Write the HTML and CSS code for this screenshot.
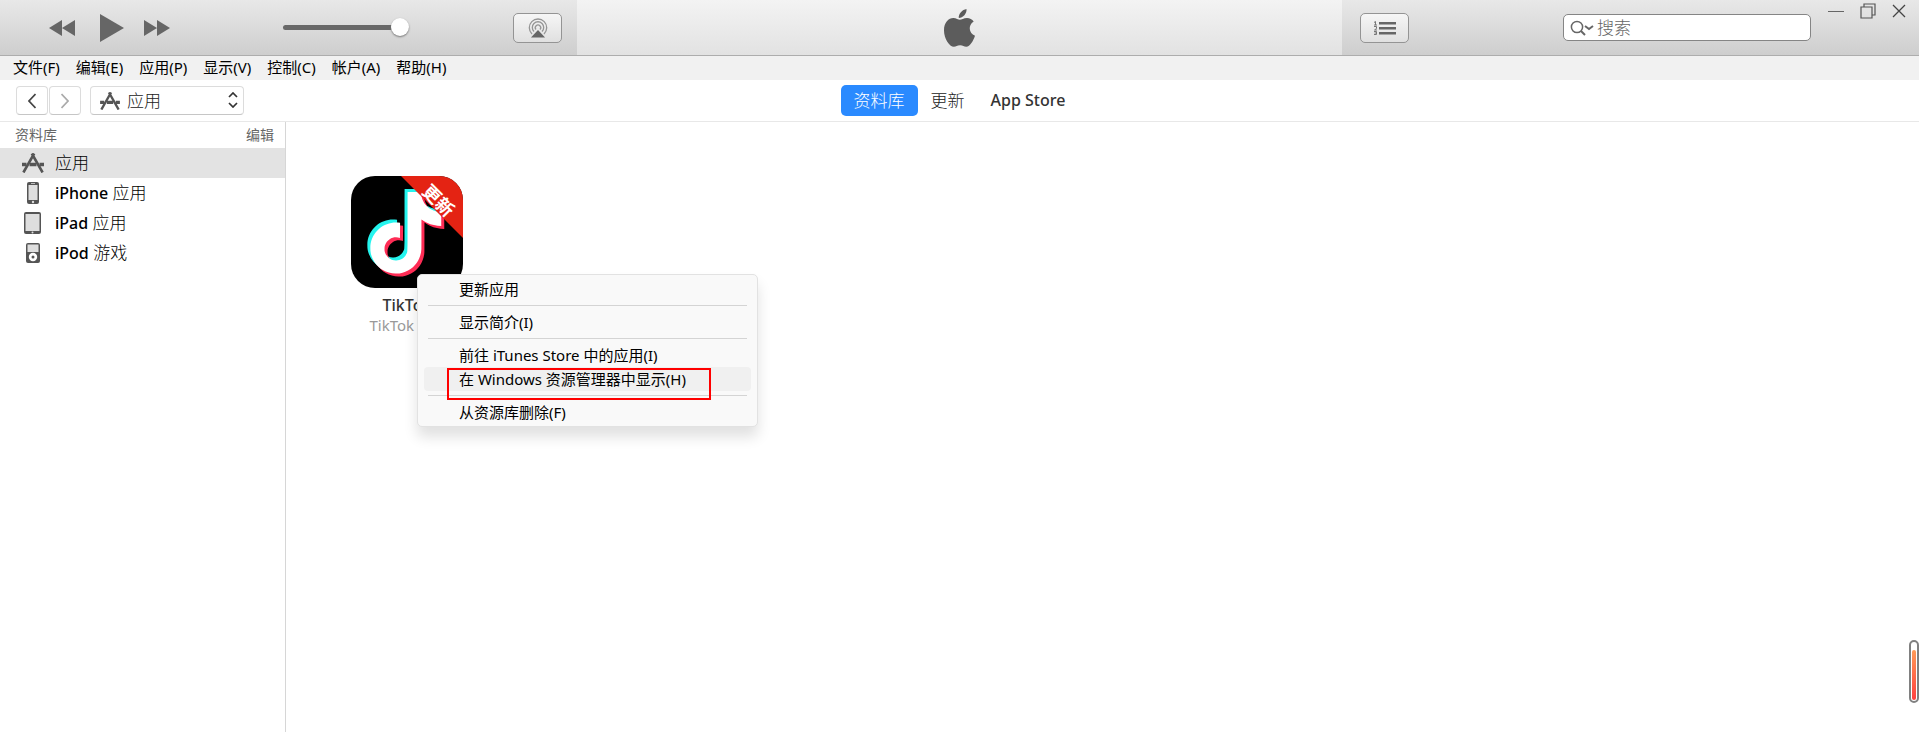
FILE: index.html
```html
<!DOCTYPE html>
<html lang="zh-CN">
<head>
<meta charset="utf-8">
<title>iTunes</title>
<link rel="stylesheet" href="styles.css">
</head>
<body>
<svg class="defs" aria-hidden="true">
  <symbol id="apps" viewBox="0 0 22 20">
    <g fill="none" stroke="currentColor">
      <path d="M9.800 0.500L20.600 19.500M12.200 0.500L1.400 19.500" stroke-width="2.600"/>
      <path d="M0 11.500h4.500M7.500 11.500h7M17.500 11.500h4.500" stroke-width="3.600"/>
    </g>
  </symbol>
</svg>
<div class="app">
  <header class="player">
    <div class="player-left">
      <button class="plain" aria-label="上一首"><svg width="26" height="16" viewBox="0 0 26 16"><path d="M13 0v16L0 8zM26 0v16L13 8z"/></svg></button>
      <button class="plain play" aria-label="播放"><svg width="24" height="28" viewBox="0 0 24 28"><path d="M0 0l24 14L0 28z"/></svg></button>
      <button class="plain" aria-label="下一首"><svg width="26" height="16" viewBox="0 0 26 16"><path d="M0 0v16l13-8zM13 0v16l13-8z"/></svg></button>
      <input class="volume" type="range" min="0" max="100" value="100" aria-label="音量">
      <button class="bevel airplay" aria-label="AirPlay"><svg width="20" height="20" viewBox="0 0 20 20"><g fill="none" stroke="#959595" stroke-width="1.300"><path d="M4 16A8.700 8.700 0 1 1 16 16"/><path d="M6 13.500A5.700 5.700 0 1 1 14 13.500"/><path d="M8 11.500A2.700 2.700 0 1 1 12 11.500"/></g><path d="M10 12l7 7.500H3z"/></svg></button>
    </div>
    <div class="player-center">
      <svg width="31" height="38" viewBox="0 0 31 38" role="img" aria-label="Apple"><path d="M22.500 0c.5 4.500-3.500 9-7.700 9C14.300 4.800 18.400.7 22.500 0zM15.800 10.800c1.800 0 3.800-1.900 7.200-1.900 2.700 0 5.200 1.400 6.700 3.600-5.900 3.600-4.900 11.700 1.300 14.200-1.700 4.900-4.900 11-8.700 11-2.400 0-3.300-1.500-6.200-1.500-3 0-4 1.500-6.200 1.500C5.500 37.700 0 29.500 0 21.400 0 13.300 4.700 9 9.300 9c2.800 0 5 1.800 6.500 1.800z"/></svg>
    </div>
    <div class="player-right">
      <button class="bevel" aria-label="待播清单"><svg width="22" height="14" viewBox="0 0 22 14"><path d="M5 1h17v2.500H5zM5 6h17v2.500H5zM5 11h17v2.500H5z"/><g fill="none" stroke="#777" stroke-width="1"><path d="M0 1.500l1.500-1V4M0 4h3M0 5.500h2.500V7.500L.5 9H3M0 10.500h2.500v3H0M.5 12h2"/></g></svg></button>
      <label class="search">
        <svg width="24" height="16" viewBox="0 0 24 16" fill="none" stroke="#666"><circle cx="7" cy="7" r="5.600" stroke-width="1.500"/><path d="M11 11l4 4" stroke-width="2"/><path d="M15 6l4 3 4-3" stroke-width="2"/></svg>
        <input type="search" placeholder="搜索" aria-label="搜索">
      </label>
      <div class="window">
        <button class="plain" aria-label="最小化"><svg width="16" height="16" viewBox="0 0 16 16"><path d="M0 8h16v1H0z"/></svg></button>
        <button class="plain" aria-label="还原"><svg width="16" height="16" viewBox="0 0 16 16" fill="none" stroke="#555" stroke-width="1.200"><path d="M1 4h11v11H1zM4 4V1h11v11h-3"/></svg></button>
        <button class="plain" aria-label="关闭"><svg width="14" height="16" viewBox="0 0 14 16" fill="none" stroke="#444" stroke-width="1.300"><path d="M1 2l12 12M13 2L1 14"/></svg></button>
      </div>
    </div>
  </header>

  <nav class="menubar" aria-label="菜单">
    <button>文件(F)</button>
    <button>编辑(E)</button>
    <button>应用(P)</button>
    <button>显示(V)</button>
    <button>控制(C)</button>
    <button>帐户(A)</button>
    <button>帮助(H)</button>
  </nav>

  <div class="toolbar">
    <div class="toolbar-left">
      <button class="step" aria-label="后退"><svg width="8" height="16" viewBox="0 0 8 16" fill="none" stroke="#444" stroke-width="1.700"><path d="M7.500 1L1 8l6.500 7"/></svg></button>
      <button class="step" aria-label="前进"><svg width="8" height="16" viewBox="0 0 8 16" fill="none" stroke="#aaa" stroke-width="1.700"><path d="M.5 1L7 8l-6.500 7"/></svg></button>
      <div class="kind">
        <svg class="kind-icon" width="20" height="18"><use href="#apps"/></svg>
        <select aria-label="媒体类型"><option>应用</option></select>
        <svg class="kind-arrows" width="10" height="16" viewBox="0 0 10 16" fill="none" stroke="#333" stroke-width="1.700"><path d="M1 5l4-4 4 4M1 11l4 4 4-4"/></svg>
      </div>
    </div>
    <div class="tabs">
      <button class="tab active">资料库</button>
      <button class="tab">更新</button>
      <button class="tab store">App Store</button>
    </div>
    <div></div>
  </div>

  <div class="body">
    <aside class="sidebar">
      <div class="side-head"><span>资料库</span><button>编辑</button></div>
      <a class="side-item current" href="#apps-all"><svg width="22" height="20"><use href="#apps"/></svg><span>应用</span></a>
      <a class="side-item" href="#iphone"><svg width="22" height="22" viewBox="0 0 22 22"><rect x="5" y="0" width="12" height="22" rx="2" fill="#555"/><path d="M6.500 3h9v15h-9z" fill="#dedede"/><path d="M9 1.500h4" stroke="#bbb"/><circle cx="11" cy="20" r="1.200" fill="#ddd"/></svg><span><b>iPhone</b> 应用</span></a>
      <a class="side-item" href="#ipad"><svg width="22" height="22" viewBox="0 0 22 22"><rect x="2" y="0" width="17" height="22" rx="2" fill="#555"/><path d="M3.500 2h14v17h-14z" fill="#dedede"/><circle cx="10.500" cy="20.500" r="1" fill="#ddd"/></svg><span><b>iPad</b> 应用</span></a>
      <a class="side-item" href="#ipod"><svg width="22" height="20" viewBox="0 0 22 20"><rect x="4" y="0" width="14" height="20" rx="2" fill="#555"/><path d="M5.500 1.500h11V9h-11z" fill="#dedede"/><circle cx="11" cy="14" r="4.200" fill="#fff"/><circle cx="11" cy="14" r="1.500" fill="#555"/></svg><span><b>iPod</b> 游戏</span></a>
    </aside>

    <main class="content">
      <div class="tile">
        <svg class="cover" viewBox="0 0 112 112" role="img" aria-label="TikTok 更新">
          <defs>
            <clipPath id="round"><rect width="112" height="112" rx="24"/></clipPath>
            <path id="note" d="M12.525.02c1.310-.020 2.610-.010 3.910-.020.080 1.530.630 3.090 1.750 4.170 1.120 1.110 2.700 1.620 4.240 1.790v4.030c-1.440-.050-2.890-.350-4.200-.970-.570-.260-1.100-.590-1.620-.930-.010 2.920.010 5.840-.020 8.750-.080 1.400-.540 2.790-1.350 3.940-1.310 1.920-3.580 3.170-5.910 3.210-1.430.080-2.860-.310-4.080-1.030-2.020-1.190-3.440-3.370-3.650-5.710-.020-.500-.030-1-.010-1.490.180-1.900 1.120-3.720 2.580-4.960 1.660-1.440 3.980-2.130 6.150-1.720.020 1.480-.040 2.960-.040 4.440-.990-.320-2.150-.230-3.020.370-.630.410-1.110 1.040-1.360 1.750-.210.510-.150 1.070-.140 1.610.240 1.640 1.820 3.020 3.500 2.870 1.120-.010 2.190-.660 2.770-1.610.190-.330.400-.670.410-1.060.100-1.790.060-3.570.070-5.360.010-4.030-.010-8.050.020-12.070z"/>
          </defs>
          <g clip-path="url(#round)">
            <path d="M0 0h112v112H0z"/>
            <use href="#note" transform="translate(11 13) scale(3.400)" fill="#25f4ee"/>
            <use href="#note" transform="translate(17 19) scale(3.400)" fill="#fe2c55"/>
            <use href="#note" transform="translate(14 16) scale(3.400)" fill="#fff"/>
            <path d="M50 0h62v62z" fill="#e42313"/>
            <text class="ribbon" transform="translate(87 25) rotate(45)" text-anchor="middle" y="6">更新</text>
          </g>
        </svg>
        <div class="name">TikTok</div>
        <div class="maker">TikTok Ltd.</div>

        <div class="context" role="menu">
          <button role="menuitem">更新应用</button>
          <hr>
          <button role="menuitem">显示简介(I)</button>
          <hr>
          <button role="menuitem">前往 iTunes Store 中的应用(I)</button>
          <button class="hover" role="menuitem">在 Windows 资源管理器中显示(H)</button>
          <hr>
          <button role="menuitem">从资源库删除(F)</button>
        </div>
      </div>
      <div class="gauge"><div class="gauge-fill"></div></div>
    </main>
  </div>
</div>
</body>
</html>
```

FILE: styles.css
```css
*, *::before, *::after { box-sizing: border-box; }

body {
  margin: 0;
  font-family: "Noto Sans", "Noto Sans CJK SC", sans-serif;
  font-size: 17px;
  color: #222;
  background: #fff;
}

button, input, select {
  font: inherit;
  color: inherit;
  margin: 0;
  padding: 0;
  border: 0;
  background: none;
}

svg { display: block; flex: none; }
.defs { position: absolute; width: 0; height: 0; }

.app {
  display: flex;
  flex-direction: column;
  min-height: 100vh;
}

/* Player bar */
.player {
  display: grid;
  grid-template-columns: 577fr 765fr 577fr;
  height: 56px;
  border-bottom: 1px solid #adadad;
  background: linear-gradient(#e8e8e8, #cecece);
  fill: #666;
}

.player-left, .player-right {
  display: flex;
  align-items: center;
}

.player-left { padding: 0 15px 0 49px; }
.play { margin: 0 20px 0 25px; }

.player-center {
  display: flex;
  align-items: center;
  justify-content: center;
  background: linear-gradient(#f3f3f3, #e2e2e2);
  fill: #5c5c5c;
}

.player-right { padding: 0 13px 0 18px; }

.volume {
  appearance: none;
  width: 126px;
  height: 20px;
  margin-left: 113px;
}
.volume::-webkit-slider-runnable-track {
  height: 5px;
  border-radius: 3px;
  background: #686868;
}
.volume::-webkit-slider-thumb {
  appearance: none;
  width: 18px;
  height: 18px;
  margin-top: -7px;
  border-radius: 50%;
  background: #fff;
  box-shadow: 0 1px 2px #777;
}

.bevel {
  display: flex;
  align-items: center;
  justify-content: center;
  width: 49px;
  height: 30px;
  border: 1px solid #949494;
  border-radius: 5px;
  background: linear-gradient(#f6f6f6, #e0e0e0);
}
.airplay { margin-left: auto; }

.search {
  display: flex;
  align-items: center;
  gap: 3px;
  width: 248px;
  height: 27px;
  margin-left: auto;
  padding: 0 6px;
  border: 1px solid #858585;
  border-radius: 5px;
  background: #fff;
}
.search input {
  flex: 1;
  min-width: 0;
  outline: 0;
  font-weight: 300;
}
.search input::placeholder { color: #666; }

.window {
  display: flex;
  align-self: flex-start;
  gap: 16px;
  margin-left: 17px;
  padding-top: 3px;
}

/* Menu bar */
.menubar {
  display: flex;
  gap: 16px;
  height: 24px;
  padding: 0 13px;
  background: #f1f1f1;
  font-size: 15px;
  color: #000;
}
.menubar button {
  height: 22px;
  line-height: 22px;
}

/* Toolbar */
.toolbar {
  display: grid;
  grid-template-columns: 1fr auto 1fr;
  align-items: center;
  height: 42px;
  border-bottom: 1px solid #e8e8e8;
}
.toolbar-left {
  display: flex;
  gap: 1px;
  padding-left: 16px;
}
.step, .kind {
  height: 29px;
  border: 1px solid #dcdcdc;
  border-bottom-color: #c6c6c6;
  border-radius: 4px;
}
.step {
  display: flex;
  align-items: center;
  justify-content: center;
  width: 32px;
}
.kind {
  position: relative;
  width: 154px;
  margin-left: 8px;
  color: #555;
}
.kind select {
  appearance: none;
  width: 100%;
  height: 27px;
  padding-left: 36px;
  font-weight: 300;
  line-height: 27px;
  color: #222;
}
.kind-icon, .kind-arrows {
  position: absolute;
  top: 5px;
  pointer-events: none;
}
.kind-icon { left: 9px; }
.kind-arrows { right: 5px; }

.tabs { display: flex; }
.tab {
  height: 31px;
  padding: 0 13px;
  border-radius: 5px;
  font-weight: 300;
  line-height: 29px;
  color: #222;
}
.active {
  background: #2a8aff;
  color: #fff;
}
.store {
  font-size: 16px;
  font-weight: 500;
  color: #333;
}

/* Library body */
.body {
  display: flex;
  flex: 1;
}
.sidebar {
  width: 286px;
  border-right: 1px solid #d6d6d6;
}
.side-head {
  display: flex;
  justify-content: space-between;
  padding: 0 11px 0 15px;
  font-size: 14px;
  line-height: 26px;
  color: #666;
}
.side-item {
  display: flex;
  align-items: center;
  gap: 11px;
  height: 30px;
  padding-left: 22px;
  font-size: 17px;
  font-weight: 300;
  line-height: 26px;
  color: #000;
  text-decoration: none;
}
.side-item b {
  font-size: 16px;
  font-weight: 500;
}
.side-item svg { color: #555; }
.current { background: #e3e3e3; }

.content {
  position: relative;
  flex: 1;
  padding: 54px 65px;
}
.tile {
  position: relative;
  width: 112px;
  text-align: center;
}
.cover { width: 112px; height: 112px; }
.ribbon {
  font-size: 18px;
  font-weight: 700;
  fill: #fff;
}
.name {
  margin-top: 7px;
  font-size: 16px;
  font-weight: 500;
  line-height: 20px;
  color: #333;
}
.maker {
  font-size: 15px;
  line-height: 20px;
  color: #999;
}

.context {
  position: absolute;
  top: 98px;
  left: 66px;
  width: 341px;
  padding: 2px 6px;
  border: 1px solid #e2e2e2;
  border-radius: 5px;
  background: #f9f9f9;
  box-shadow: 0 10px 14px #0000001f;
  font-size: 15px;
  color: #000;
}
.context button {
  display: block;
  position: relative;
  width: 100%;
  height: 24px;
  padding-left: 35px;
  border-radius: 4px;
  line-height: 24px;
  text-align: left;
}
.context .hover { background: #f0f0f0; }
.hover::after {
  content: "";
  position: absolute;
  z-index: 1;
  top: 1px;
  left: 23px;
  width: 264px;
  height: 32px;
  border: 2px solid #f00;
}
.context hr {
  height: 1px;
  margin: 4px;
  border: 0;
  background: #d4d4d4;
}

.gauge {
  position: absolute;
  right: 0;
  bottom: 29px;
  width: 10px;
  height: 63px;
  padding: 8px 1px 0;
  border: 2px solid #808080;
  border-radius: 5px;
  background: #fff;
}
.gauge-fill {
  height: 50px;
  border-radius: 2px;
  background: linear-gradient(#ff9a56, #ff4040);
}
```
